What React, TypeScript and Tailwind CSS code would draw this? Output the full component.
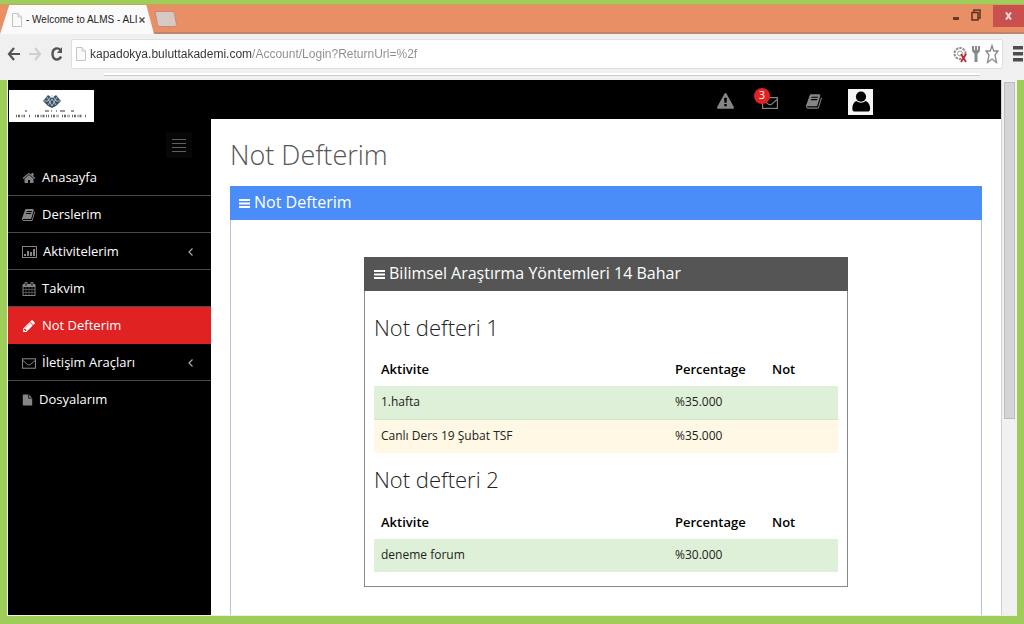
import type { ReactNode } from "react";

type IconProps = { className?: string };

// Font Awesome 4 outlines, all on a 1792 grid
const PATHS = {
  home: "M1472 992v480q0 26-19 45t-45 19h-384v-384h-256v384h-384q-26 0-45-19t-19-45v-480q0-1 .5-3t.5-3l575-474 575 474q1 2 1 6zm223-69l-62 74q-8 9-21 11h-3q-13 0-21-7l-692-577-692 577q-12 8-24 7-13-2-21-11l-62-74q-8-10-7-23.5t11-21.5l719-599q32-26 76-26t76 26l244 204v-195q0-14 9-23t23-9h192q14 0 23 9t9 23v408l219 182q10 8 11 21.5t-7 23.5z",
  book: "M1639 478q40 57 18 129l-275 906q-19 64-76.5 107.5t-122.5 43.5h-923q-77 0-148.5-53.5t-99.5-131.5q-24-67-2-127 0-4 3-27t4-37q1-8-3-21.5t-3-19.5q2-11 8-21t16.5-23.5 16.5-23.5q23-38 45-91.5t30-91.5q3-10 .5-30t-.5-28q3-11 17-28t17-23q21-36 42-92t25-90q1-9-2.5-32t.5-28q4-13 22-30.5t22-22.5q19-26 42.5-84.5t27.5-96.5q1-8-3-25.5t-2-26.5q2-8 9-18t18-23 17-21q8-12 16.5-30.5t15-35 16-36 19.5-32 26.5-23.5 36-11.5 47.5 5.5l-1 3q38-9 51-9h761q74 0 114 56t18 130l-274 906q-36 119-71.5 153.5t-128.5 34.5h-869q-27 0-38 15-11 16-1 43 24 70 144 70h923q29 0 56-15.5t35-41.5l300-987q7-22 5-57 38 15 59 43zm-1064 2q-4 13 2 22.5t20 9.5h608q13 0 25.5-9.5t16.5-22.5l21-64q4-13-2-22.5t-20-9.5h-608q-13 0-25.5 9.5t-16.5 22.5zm-83 256q-4 13 2 22.5t20 9.5h608q13 0 25.5-9.5t16.5-22.5l21-64q4-13-2-22.5t-20-9.5h-608q-13 0-25.5 9.5t-16.5 22.5z",
  calendar:
    "M192 1664h288v-288h-288v288zm352 0h320v-288h-320v288zm-352-352h288v-320h-288v320zm352 0h320v-320h-320v320zm-352-384h288v-288h-288v288zm736 736h320v-288h-320v288zm-384-736h320v-288h-320v288zm768 736h288v-288h-288v288zm-384-352h320v-320h-320v320zm-352-864v-288q0-13-9.5-22.5t-22.5-9.5h-64q-13 0-22.5 9.5t-9.5 22.5v288q0 13 9.5 22.5t22.5 9.5h64q13 0 22.5-9.5t9.5-22.5zm736 864h288v-320h-288v320zm-384-384h320v-288h-320v288zm384 0h288v-288h-288v288zm32-480v-288q0-13-9.5-22.5t-22.5-9.5h-64q-13 0-22.5 9.5t-9.5 22.5v288q0 13 9.5 22.5t22.5 9.5h64q13 0 22.5-9.5t9.5-22.5zm384-64v1280q0 52-38 90t-90 38h-1408q-52 0-90-38t-38-90v-1280q0-52 38-90t90-38h128v-96q0-66 47-113t113-47h64q66 0 113 47t47 113v96h384v-96q0-66 47-113t113-47h64q66 0 113 47t47 113v96h128q52 0 90 38t38 90z",
  pencil:
    "M491 1536l91-91-235-235-91 91v107h128v128h107zm523-928q0-22-22-22-10 0-17 7l-542 542q-7 7-7 17 0 22 22 22 10 0 17-7l542-542q7-7 7-17zm-54-192l416 416-832 832h-416v-416zm683 96q0 53-37 90l-166 166-416-416 166-165q36-38 90-38 53 0 91 38l235 234q37 39 37 91z",
  warning:
    "M1024 1375v-190q0-14-9.5-23.5t-22.5-9.5h-192q-13 0-22.5 9.5t-9.5 23.5v190q0 14 9.5 23.5t22.5 9.5h192q13 0 22.5-9.5t9.5-23.5zm-2-374l18-459q0-12-10-19-13-11-24-11h-220q-11 0-24 11-10 7-10 21l17 457q0 10 10 16.5t24 6.5h185q14 0 23.5-6.5t10.5-16.5zm-14-934l768 1408q35 63-2 126-17 29-46.5 46t-63.5 17h-1536q-34 0-63.5-17t-46.5-46q-37-63-2-126l768-1408q17-31 47-49t65-18 65 18 47 49z",
  file: "M1152 512v-472q22 14 36 28l408 408q14 14 28 36h-472zm-128 32q0 40 28 68t68 28h544v1056q0 40-28 68t-68 28h-1344q-40 0-68-28t-28-68v-1600q0-40 28-68t68-28h800v544z",
};

function FaIcon({ name, className }: IconProps & { name: keyof typeof PATHS }) {
  return (
    <svg viewBox="0 0 1792 1792" fill="currentColor" className={className} aria-hidden="true">
      <path d={PATHS[name]} />
    </svg>
  );
}

function ChartIcon({ className }: IconProps) {
  return (
    <svg viewBox="0 0 15 12" className={className} aria-hidden="true">
      <rect x="0.5" y="0.5" width="14" height="11" fill="none" stroke="currentColor" />
      <path d="M2 8h2v2H2zM5 5h2v5H5zM8 6h2v4H8zM11 3h2v7h-2z" fill="currentColor" />
    </svg>
  );
}

function EnvelopeIcon({ className }: IconProps) {
  return (
    <svg viewBox="0 0 16 12" fill="none" stroke="currentColor" className={className} aria-hidden="true">
      <rect x="0.6" y="0.6" width="14.8" height="10.8" strokeWidth="1.2" />
      <path d="M1 2.5l5.5 4.8q1.500 1 3 0L15 2.500" strokeWidth="1.100" />
    </svg>
  );
}

function BarsIcon({ className }: IconProps) {
  return (
    <svg viewBox="0 0 11 9" fill="currentColor" className={className} aria-hidden="true">
      <path d="M0 0h11v2H0zM0 3.500h11v2H0zM0 7h11v2H0z" />
    </svg>
  );
}

function PageIcon({ className }: IconProps) {
  return (
    <svg viewBox="0 0 10 14" fill="#fafafa" stroke="#c4c4c4" className={className} aria-hidden="true">
      <path d="M.5.5h5.500l3.500 3.500v9.500h-9zM6 .5V4h3.500" />
    </svg>
  );
}

function Logo() {
  return (
    <a href="#home" aria-label="Ana sayfa" className="ml-px block w-[85px] bg-white">
      <svg viewBox="0 0 85 32" className="block h-8 w-full" aria-hidden="true">
        <path d="M34 11l5-6 4 3 4-3 5 6-5 5-4 2-4-2z" fill="#3d5364" />
        <path d="M38 7l5 9 5-9M35 11h4l4-6 4 6h4M39 15l4-6 4 6" fill="none" stroke="#c9d6de" strokeWidth=".8" />
        <path d="M16 21h2M36 21h4M42 21h1M47 21h1M51 21h5M62 21h3" stroke="#777" strokeWidth="1.500" />
        <path
          d="M7 26h9M20 26h2M26 26h14M42 26h8M53 26h8M63 26h11M76 26h2"
          stroke="#666"
          strokeWidth="2.500"
          strokeDasharray="1 1 2 1.500"
        />
      </svg>
    </a>
  );
}

const grayIcon = "text-[#858585]";

type MenuItem = { label: string; icon: ReactNode; active?: boolean; expandable?: boolean };

const menu: MenuItem[] = [
  { label: "Anasayfa", icon: <FaIcon name="home" className="size-[14px]" /> },
  { label: "Derslerim", icon: <FaIcon name="book" className="size-[14px]" /> },
  { label: "Aktivitelerim", icon: <ChartIcon className="h-3 w-[15px]" />, expandable: true },
  { label: "Takvim", icon: <FaIcon name="calendar" className="size-[14px]" /> },
  { label: "Not Defterim", icon: <FaIcon name="pencil" className="size-[14px]" />, active: true },
  { label: "İletişim Araçları", icon: <EnvelopeIcon className="h-[11px] w-[14px]" />, expandable: true },
  { label: "Dosyalarım", icon: <FaIcon name="file" className="h-3 w-[11px]" /> },
];

type Row = { name: string; percentage: string; className: string };

const books: { title: string; rows: Row[] }[] = [
  {
    title: "Not defteri 1",
    rows: [
      { name: "1.hafta", percentage: "%35.000", className: "bg-[#dff0d8] border-[#d3e6cb]" },
      { name: "Canlı Ders 19 Şubat TSF", percentage: "%35.000", className: "bg-[#fef8e4] border-[#fef8e4]" },
    ],
  },
  {
    title: "Not defteri 2",
    rows: [{ name: "deneme forum", percentage: "%30.000", className: "bg-[#dff0d8] border-[#dff0d8]" }],
  },
];

function BrowserChrome() {
  return (
    <div className="font-['Liberation_Sans',sans-serif]">
      <div className="h-[5px] border-b border-[#c0a95a] bg-[#a0cc5a]" />
      <div className="flex h-[29px] items-start border-b-2 border-[#bd8373] bg-[#e98f66]">
        <div className="flex h-[29px] w-[154px] items-center bg-[#fbfafa] pr-[9px] pl-3 [clip-path:polygon(6%_0,95%_0,100%_100%,0_100%)]">
          <PageIcon className="h-[14px] w-[10px] shrink-0" />
          <span className="ml-1 text-[10px] whitespace-nowrap text-[#222]">- Welcome to ALMS - ALI</span>
          <button type="button" aria-label="Sekmeyi kapat" className="ml-auto shrink-0 text-[#555]">
            <svg viewBox="0 0 6 6" className="size-[6px]" stroke="currentColor" strokeWidth="1.500">
              <path d="M.5.5l5 5M5.500.5l-5 5" />
            </svg>
          </button>
        </div>
        <button type="button" aria-label="Yeni sekme" className="mt-[6px]">
          <svg viewBox="0 0 23 16" className="h-4 w-[23px]">
            <path d="M1 .5h17q2 0 2.500 2l2 11q0 2-2 2H6q-2 0-2.500-2z" fill="#d6c9c4" stroke="#c08a76" />
          </svg>
        </button>
        <div className="ml-auto flex items-start">
          <button type="button" aria-label="Simge durumuna küçült" className="mt-[12px] h-[3px] w-[6px] bg-[#6b3a26]" />
          <button type="button" aria-label="Önceki boyut" className="mx-3 mt-1 text-[#5e3220]">
            <svg viewBox="0 0 10 12" className="h-3 w-[10px]" fill="none" stroke="currentColor" strokeWidth="1.500">
              <path d="M1 3.500h6v7.500H1zM3 3V1h6v8H7" />
            </svg>
          </button>
          <button type="button" aria-label="Kapat" className="flex h-[22px] w-[31px] items-center justify-center bg-[#c9504f] text-[#f3dede]">
            <svg viewBox="0 0 7 8" className="h-2 w-[7px]" stroke="currentColor" strokeWidth="2">
              <path d="M1 .5l5 7M6 .5l-5 7" />
            </svg>
          </button>
        </div>
      </div>
      <div className="bg-[#f1f0f0] pt-1">
        <div className="flex h-8 items-center pl-[7px]">
          <button type="button" aria-label="Geri" className="text-[#555]">
            <svg viewBox="0 0 13 14" className="h-[14px] w-[13px]" fill="none" stroke="currentColor" strokeWidth="2.200">
              <path d="M7 1L2 7l5 6M2 7h11" />
            </svg>
          </button>
          <button type="button" aria-label="İleri" className="ml-[9px] text-[#cfcfcf]">
            <svg viewBox="0 0 13 14" className="h-[14px] w-[13px]" fill="none" stroke="currentColor" strokeWidth="2.200">
              <path d="M6 1l5 6-5 6M11 7H0" />
            </svg>
          </button>
          <button type="button" aria-label="Yenile" className="ml-[9px] text-[#555]">
            <svg viewBox="0 0 12 16" className="h-4 w-3" fill="none" stroke="currentColor" strokeWidth="2.400">
              <path d="M9.500 4Q7.500 2 5 2.500 1.500 3.500 1.500 8T5 13.500q3.500.5 5-3" />
              <path d="M11 1v6H6z" fill="currentColor" stroke="none" />
            </svg>
          </button>
          <div className="ml-2 flex h-[30px] min-w-0 flex-1 items-center rounded-xs border border-[#e0dfdf] bg-white">
            <PageIcon className="ml-1 h-4 w-[10px] shrink-0" />
            <input
              aria-label="Adres"
              readOnly
              value="kapadokya.buluttakademi.com/Account/Login?ReturnUrl=%2f"
              className="ml-1 min-w-0 flex-1 bg-linear-to-r from-[#333] from-[162px] to-[#8c8c8c] to-[162px] bg-clip-text text-xs text-transparent outline-none"
            />
            <svg viewBox="0 0 14 20" className="h-5 w-[14px]" aria-hidden="true">
              <circle cx="7" cy="9.500" r="5.500" fill="none" stroke="#8f8f8f" strokeWidth="2" strokeDasharray="2.500 1" />
              <circle cx="7" cy="9.500" r="2.500" fill="none" stroke="#999" />
              <path d="M8 10l5 8M13 10l-5 8" stroke="#c2272d" strokeWidth="1.800" />
            </svg>
            <svg viewBox="0 0 8 16" className="ml-[5px] h-4 w-2" fill="#8a8a8a" aria-hidden="true">
              <path d="M0 0h2v4h1V0h2v4h1V0h2v5L5.500 8v8h-3V8L0 5z" />
            </svg>
            <button type="button" aria-label="Yer imi ekle" className="mr-[3px] ml-[5px] text-[#8a8a8a]">
              <svg viewBox="0 0 14 20" className="h-5 w-[14px]" fill="none" stroke="currentColor" strokeWidth="1.300">
                <path d="M7 1.500l1.700 5.500H13l-3 4 1.500 7.500L7 15l-4.500 3.500L4 11 1 7h4.300z" />
              </svg>
            </button>
          </div>
          <button type="button" aria-label="Menü" className="mr-px ml-[10px] text-[#4d4d4d]">
            <svg viewBox="0 0 10 16" className="h-4 w-[10px]" fill="currentColor">
              <path d="M0 0h10v3.500H0zM0 6h10v3.500H0zM0 12h10v3.500H0z" />
            </svg>
          </button>
        </div>
        <div className="h-[10px] pt-[3px] pr-11 pl-[104px]">
          <div className="h-[3px] border-b border-[#c9c9c9] bg-white" />
        </div>
      </div>
    </div>
  );
}

function Sidebar() {
  return (
    <aside className="w-[203px] shrink-0 bg-black pt-[10px]">
      <Logo />
      <button
        type="button"
        aria-label="Menüyü daralt"
        className="mt-[10px] ml-[158px] flex size-[26px] items-center justify-center bg-[#070707] text-[#606060]"
      >
        <svg viewBox="0 0 14 13" className="h-[13px] w-[14px]" fill="currentColor">
          <path d="M0 0h14v1H0zM0 4h14v1H0zM0 8h14v1H0zM0 12h14v1H0z" />
        </svg>
      </button>
      <nav className="mt-px">
        {menu.map((item) => (
          <a
            key={item.label}
            href="#menu"
            className={
              item.active
                ? "flex h-[37px] items-center border-b border-[#e02222] bg-[#e02222] px-[14px] pt-[2px] text-white"
                : "flex h-[37px] items-center border-b border-[#4a4a4a] px-[14px] pt-[2px] text-white last:border-transparent"
            }
          >
            <span className={item.active ? "text-white" : grayIcon}>{item.icon}</span>
            <span className="ml-[6px] text-[13px]">{item.label}</span>
            {item.expandable ? (
              <svg viewBox="0 0 5 8" className="mr-1 ml-auto h-2 w-[5px]" fill="none" stroke="#aaa" aria-hidden="true">
                <path d="M4.500.5L1 4l3.500 3.500" strokeWidth="1.200" />
              </svg>
            ) : null}
          </a>
        ))}
      </nav>
    </aside>
  );
}

function TopBar() {
  return (
    <header className="flex h-[39px] items-center justify-end gap-7 bg-black pt-1 pr-32">
      <button type="button" aria-label="Uyarılar" className={grayIcon}>
        <FaIcon name="warning" className="size-[17px]" />
      </button>
      <button type="button" aria-label="Mesajlar" className={`relative ${grayIcon}`}>
        <EnvelopeIcon className="mt-[2px] h-3 w-4" />
        <span className="absolute -top-[7px] -left-2 flex size-4 items-center justify-center rounded-full bg-[#e02222] text-[11px] text-white">
          3
        </span>
      </button>
      <button type="button" aria-label="Dersler" className={grayIcon}>
        <FaIcon name="book" className="size-[17px]" />
      </button>
      <button type="button" aria-label="Profil" className="-ml-[3px] bg-[#f5f5f5] text-black">
        <svg viewBox="0 0 25 26" className="mb-px h-[25px] w-[25px]" fill="currentColor">
          <circle cx="13" cy="8" r="5.300" />
          <path d="M8 12.500q5 3.500 10 0 4.500 2 4.500 8 0 3-3 3H7q-3 0-3-3 0-6 4-8z" />
        </svg>
      </button>
    </header>
  );
}

function GradeTable({ rows, label }: { rows: Row[]; label: string }) {
  return (
    <table aria-label={label} className="w-full table-fixed text-left text-xs text-[#222]">
      <thead>
        <tr className="h-8 text-[13px] text-black">
          <th className="px-[7px] font-semibold">Aktivite</th>
          <th className="w-[97px] px-[7px] font-semibold">Percentage</th>
          <th className="w-[73px] px-[7px] font-semibold">Not</th>
        </tr>
      </thead>
      <tbody>
        {rows.map((row) => (
          <tr key={row.name} className={`h-[33px] border-b ${row.className}`}>
            <td className="px-[7px]">{row.name}</td>
            <td className="px-[7px]">{row.percentage}</td>
            <td />
          </tr>
        ))}
      </tbody>
    </table>
  );
}

function Content() {
  return (
    <main className="flex flex-1 flex-col bg-white px-[19px] pt-4">
      <h1 className="text-[27px] leading-10 font-light text-[#555]">Not Defterim</h1>
      <section className="mt-[11px] flex-1 border-x border-[#b4bfe6]">
        <h2 className="-mx-px flex h-[34px] items-center gap-1 bg-[#4b8df8] px-[9px] pb-[2px] text-base text-white">
          <BarsIcon className="mt-[2px] h-[9px] w-[11px]" />
          Not Defterim
        </h2>
        <div className="mx-auto mt-[37px] max-w-[484px] border border-[#888]">
          <h3 className="-m-px flex h-[34px] items-center gap-1 bg-[#555] px-[10px] pb-[2px] text-base text-white">
            <BarsIcon className="mt-[2px] h-[9px] w-[11px]" />
            Bilimsel Araştırma Yöntemleri 14 Bahar
          </h3>
          <div className="flex flex-col gap-2 px-[9px] pt-[18px] pb-[14px]">
            {books.map((book) => (
              <div key={book.title}>
                <h4 className="flex h-[46px] items-center pb-2 text-[22px] font-light text-[#222]">{book.title}</h4>
                <GradeTable rows={book.rows} label={book.title} />
              </div>
            ))}
          </div>
        </div>
      </section>
    </main>
  );
}

export default function App() {
  return (
    <div className="flex min-h-screen flex-col bg-[#a0cc5a]">
      <BrowserChrome />
      <div className="mx-[7px] mb-2 flex flex-1 border-b border-l border-[#e8f2d8] font-['Open_Sans',sans-serif]">
        <Sidebar />
        <div className="flex min-w-0 flex-1 flex-col">
          <TopBar />
          <Content />
        </div>
        <div className="w-4 shrink-0 border-l border-[#cfcfcf] bg-[#f1f1f3] px-[2px] pt-[2px]">
          <div className="h-[337px] border border-[#bdbdbd] bg-[#d5d4d8]" />
        </div>
      </div>
    </div>
  );
}
